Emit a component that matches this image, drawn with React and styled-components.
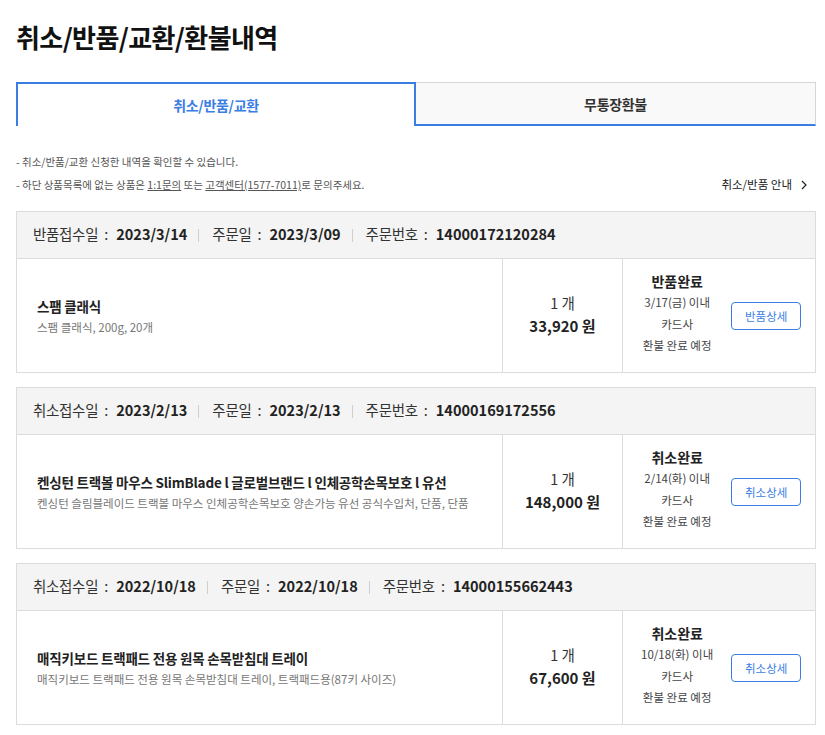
import styled, { createGlobalStyle } from 'styled-components';

const GlobalStyle = createGlobalStyle`
  body {
    margin: 0;
    background: #fff;
    font-family: 'Noto Sans CJK KR', 'Noto Sans', sans-serif;
    color: #222;
  }
`;

const Page = styled.div`
  padding: 16px 9px 20px 16px;
`;

const Title = styled.h1`
  margin: 0;
  font-size: 26px;
  font-weight: 700;
  letter-spacing: -0.6px;
  line-height: 42px;
  color: #111;
`;

const Tabs = styled.div`
  display: grid;
  grid-template-columns: 1fr 1fr;
  margin-top: 24px;
`;

const Tab = styled.div`
  height: 44px;
  display: flex;
  align-items: center;
  justify-content: center;
  box-sizing: border-box;
  font-size: 14px;
  font-weight: 700;
  letter-spacing: -0.3px;
  ${(p) =>
    p.$active
      ? `
    color: #3a7ee4;
    background: #fff;
    border: 2px solid #3a7ee4;
    border-bottom: none;
  `
      : `
    color: #333;
    background: #f9f9f9;
    border-top: 1px solid #d6d6d6;
    border-right: 1px solid #d6d6d6;
    border-bottom: 2px solid #3a7ee4;
  `}
`;

const InfoRow = styled.div`
  display: flex;
  justify-content: space-between;
  align-items: flex-end;
  margin-top: 24px;
`;

const Notes = styled.ul`
  margin: 0;
  padding: 0;
  list-style: none;
  font-size: 10.5px;
  color: #555;
  line-height: 23px;
`;

const Link = styled.span`
  text-decoration: underline;
`;

const Guide = styled.div`
  display: flex;
  align-items: center;
  gap: 8px;
  font-size: 11.5px;
  color: #222;
  line-height: 23px;
  padding-right: 8px;
`;

const List = styled.div`
  display: flex;
  flex-direction: column;
  gap: 14px;
  margin-top: 15px;
`;

const Card = styled.div`
  border: 1px solid #dcdcdc;
`;

const CardHead = styled.div`
  height: 43px;
  display: flex;
  align-items: center;
  padding: 0 0 3px 16px;
  background: #f4f4f4;
  border-bottom: 1px solid #dcdcdc;
  font-size: 14.5px;
  color: #333;
`;

const Label = styled.span`
  letter-spacing: -0.3px;
`;

const Colon = styled.span`
  margin: 0 8px 0 6px;
`;

const Value = styled.b`
  font-weight: 700;
  color: #222;
`;

const Sep = styled.span`
  width: 1px;
  height: 13px;
  background: #cfcfcf;
  margin: 3px 13px 0 11px;
`;

const CardBody = styled.div`
  display: grid;
  grid-template-columns: 1fr 121px 192px;
  height: 113px;
`;

const Product = styled.div`
  display: flex;
  flex-direction: column;
  justify-content: center;
  padding-left: 20px;
  gap: 3px;
`;

const ProductName = styled.div`
  font-size: 13.5px;
  font-weight: 700;
  color: #222;
  letter-spacing: -0.2px;
`;

const ProductOption = styled.div`
  font-size: 11.5px;
  color: #777;
`;

const Qty = styled.div`
  display: flex;
  flex-direction: column;
  align-items: center;
  justify-content: center;
  border-left: 1px solid #dcdcdc;
  border-right: 1px solid #dcdcdc;
  font-size: 14.5px;
  color: #333;
  line-height: 23px;
  padding-bottom: 4px;
`;

const Price = styled.div`
  font-weight: 700;
  font-size: 15px;
  color: #222;
`;

const StatusCol = styled.div`
  display: flex;
  align-items: center;
  padding-right: 14px;
`;

const StatusText = styled.div`
  width: 112px;
  text-align: center;
  font-size: 11.5px;
  color: #444;
  line-height: 21.5px;
  padding-bottom: 4px;
`;

const StatusTitle = styled.div`
  font-size: 14px;
  font-weight: 700;
  color: #222;
  line-height: 22px;
`;

const DetailButton = styled.button`
  margin-left: auto;
  width: 72px;
  height: 28px;
  border: 1px solid #3a7ee4;
  border-radius: 4px;
  background: #fff;
  color: #3a7ee4;
  font-family: inherit;
  font-size: 11.5px;
  padding: 0;
`;

const orders = [
  {
    kind: '반품접수일',
    received: '2023/3/14',
    ordered: '2023/3/09',
    no: '14000172120284',
    name: '스팸 클래식',
    option: '스팸 클래식, 200g, 20개',
    price: '33,920',
    status: '반품완료',
    due: '3/17(금) 이내',
    button: '반품상세',
  },
  {
    kind: '취소접수일',
    received: '2023/2/13',
    ordered: '2023/2/13',
    no: '14000169172556',
    name: '켄싱턴 트랙볼 마우스 SlimBlade l 글로벌브랜드 l 인체공학손목보호 l 유선',
    option: '켄싱턴 슬림블레이드 트랙볼 마우스 인체공학손목보호 양손가능 유선 공식수입처, 단품, 단품',
    price: '148,000',
    status: '취소완료',
    due: '2/14(화) 이내',
    button: '취소상세',
  },
  {
    kind: '취소접수일',
    received: '2022/10/18',
    ordered: '2022/10/18',
    no: '14000155662443',
    name: '매직키보드 트랙패드 전용 원목 손목받침대 트레이',
    option: '매직키보드 트랙패드 전용 원목 손목받침대 트레이, 트랙패드용(87키 사이즈)',
    price: '67,600',
    status: '취소완료',
    due: '10/18(화) 이내',
    button: '취소상세',
  },
];

const Chevron = () => (
  <svg width="8" height="10" viewBox="0 0 8 10" fill="none">
    <path d="M2 1l4 4-4 4" stroke="#222" strokeWidth="1.2" />
  </svg>
);

export default function App() {
  return (
    <Page>
      <GlobalStyle />
      <Title>취소/반품/교환/환불내역</Title>
      <Tabs>
        <Tab $active>취소/반품/교환</Tab>
        <Tab>무통장환불</Tab>
      </Tabs>
      <InfoRow>
        <Notes>
          <li>- 취소/반품/교환 신청한 내역을 확인할 수 있습니다.</li>
          <li>
            - 하단 상품목록에 없는 상품은 <Link>1:1문의</Link> 또는{' '}
            <Link>고객센터(1577-7011)</Link>로 문의주세요.
          </li>
        </Notes>
        <Guide>
          취소/반품 안내 <Chevron />
        </Guide>
      </InfoRow>
      <List>
        {orders.map((o) => (
          <Card key={o.no}>
            <CardHead>
              <Label>{o.kind}</Label>
              <Colon>:</Colon>
              <Value>{o.received}</Value>
              <Sep />
              <Label>주문일</Label>
              <Colon>:</Colon>
              <Value>{o.ordered}</Value>
              <Sep />
              <Label>주문번호</Label>
              <Colon>:</Colon>
              <Value>{o.no}</Value>
            </CardHead>
            <CardBody>
              <Product>
                <ProductName>{o.name}</ProductName>
                <ProductOption>{o.option}</ProductOption>
              </Product>
              <Qty>
                <div>1 개</div>
                <Price>{o.price} 원</Price>
              </Qty>
              <StatusCol>
                <StatusText>
                  <StatusTitle>{o.status}</StatusTitle>
                  <div>{o.due}</div>
                  <div>카드사</div>
                  <div>환불 완료 예정</div>
                </StatusText>
                <DetailButton>{o.button}</DetailButton>
              </StatusCol>
            </CardBody>
          </Card>
        ))}
      </List>
    </Page>
  );
}
